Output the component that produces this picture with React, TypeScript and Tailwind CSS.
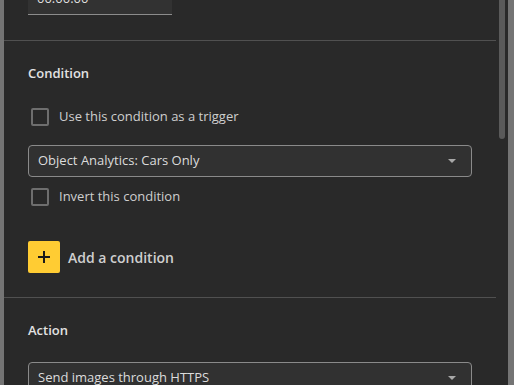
import React from "react";

const font = { fontFamily: '"Open Sans", "Noto Sans", sans-serif' };

function Checkbox({ label }: { label: string }) {
  return (
    <label className="flex h-6 items-center gap-[10px] pl-[3px]">
      <span className="h-[18px] w-[18px] rounded-[2px] border-2 border-[#6e6e6e]" />
      <span className="text-[13px] text-[#cfcfcf]">{label}</span>
    </label>
  );
}

function Select({ value }: { value: string }) {
  return (
    <div className="flex h-8 items-center justify-between rounded-[4px] border border-[#8a8a8a] bg-[#313131] pl-[9px] pr-[14px]">
      <span className="text-[13px] text-[#dcdcdc]">{value}</span>
      <svg width="10" height="6" viewBox="0 0 10 6">
        <path d="M1 1h8L5 5z" fill="#a8a8a8" />
      </svg>
    </div>
  );
}

export default function App() {
  return (
    <div className="flex h-[385px] w-[514px] overflow-hidden bg-[#292929]" style={font}>
      <div className="w-[4px] shrink-0 bg-[#747474]" />

      <div className="flex w-[492px] shrink-0 flex-col">
        {/* time field, scrolled partly out of view */}
        <div className="mt-[-17px] px-6">
          <div className="flex h-8 w-[144px] items-center border-b border-[#8c8c8c] bg-[#323232] pl-[9px] text-[13px] text-[#dedede]">
            00:00:00
          </div>
        </div>

        <div className="mt-[25px] border-t border-[#505050]" />

        {/* Condition */}
        <section className="flex flex-col px-6 pt-[22px]">
          <h3 className="text-[13px] font-semibold leading-5 text-[#e2e2e2]">Condition</h3>
          <div className="mt-[22px]">
            <Checkbox label="Use this condition as a trigger" />
          </div>
          <div className="mt-4">
            <Select value="Object Analytics: Cars Only" />
          </div>
          <div className="mt-2">
            <Checkbox label="Invert this condition" />
          </div>
          <button className="mt-8 flex items-center gap-2 self-start">
            <span className="flex h-8 w-8 items-center justify-center rounded-[2px] bg-[#ffcc33]">
              <svg width="14" height="14" viewBox="0 0 14 14">
                <path d="M7 1v12M1 7h12" stroke="#1a1a1a" strokeWidth="2" />
              </svg>
            </span>
            <span className="text-[14px] font-semibold text-[#cfcfcf]">Add a condition</span>
          </button>
        </section>

        <div className="mt-6 border-t border-[#505050]" />

        {/* Action */}
        <section className="flex flex-col px-6 pt-[22px]">
          <h3 className="text-[13px] font-semibold leading-5 text-[#e2e2e2]">Action</h3>
          <div className="mt-[22px]">
            <Select value="Send images through HTTPS" />
          </div>
        </section>
      </div>

      {/* scrollbar */}
      <div className="flex w-[12px] shrink-0 justify-center">
        <div className="h-[139px] w-[6px] rounded-b-[3px] bg-[#5a5a5a]" />
      </div>
      <div className="w-[6px] shrink-0 bg-[#747474]" />
    </div>
  );
}
